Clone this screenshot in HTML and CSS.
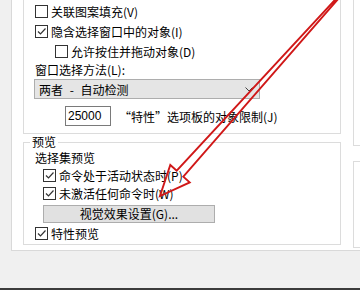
FILE: index.html
```html
<!DOCTYPE html>
<html lang="zh">
<head>
    <meta charset="UTF-8">
    <title>选项 - 选择集</title>
    <link rel="stylesheet" href="styles.css">
</head>
<body>
<div class="screen">
    <div class="tabpage">
        <div class="col-left">
            <div class="group group-top">
                <label class="check"><span class="box"></span>关联图案填充(V)</label>
                <label class="check"><span class="box"><svg viewBox="0 0 11 11"><path d="M2 5.5 L4.5 8 L9.5 2.5"/></svg></span>隐含选择窗口中的对象(I)</label>
                <label class="check sub"><span class="box"></span>允许按住并拖动对象(D)</label>
                <div class="field-label">窗口选择方法(L):</div>
                <div class="select">
                    <span class="select-text">两者 - 自动检测</span>
                    <svg class="chevron" viewBox="0 0 8 5"><path d="M0.5 0.5 L4 4 L7.5 0.5"/></svg>
                </div>
                <div class="limit-row">
                    <div class="num-input">25000</div>
                    <span class="limit-text">“特性”选项板的对象限制(J)</span>
                </div>
            </div>
            <div class="group group-preview">
                <div class="legend">预览</div>
                <div class="field-label sel-preview">选择集预览</div>
                <label class="check sub row18"><span class="box"><svg viewBox="0 0 11 11"><path d="M2 5.5 L4.5 8 L9.5 2.5"/></svg></span>命令处于活动状态时(P)</label>
                <label class="check sub row18"><span class="box"><svg viewBox="0 0 11 11"><path d="M2 5.5 L4.5 8 L9.5 2.5"/></svg></span>未激活任何命令时(W)</label>
                <div class="btn">视觉效果设置(G)...</div>
                <label class="check"><span class="box"><svg viewBox="0 0 11 11"><path d="M2 5.5 L4.5 8 L9.5 2.5"/></svg></span>特性预览</label>
            </div>
        </div>
        <div class="col-right">
            <div class="group-r first"></div>
            <div class="group-r second"></div>
        </div>
    </div>
    <div class="footer"></div>
    <div class="bottom-bar"></div>

    <!-- 红色箭头标注 -->
    <svg class="arrow" viewBox="0 0 360 290">
        <polygon points="341.6,-5 183.3,176.7 189.7,182.4 160,196 170.3,165 176.7,170.7 340.4,-6"/>
    </svg>
</div>
</body>
</html>
```

FILE: styles.css
```css
* {
    box-sizing: border-box;
}
html, body {
    margin: 0;
    height: 100%;
}
body {
    background: #f0f0f0;
    font-family: "Noto Sans CJK SC", "Noto Sans", sans-serif;
    font-size: 12px;
    color: #000;
    overflow: hidden;
}
.screen {
    position: relative;
    width: 360px;
    height: 290px;
    display: flex;
    flex-direction: column;
}
.tabpage {
    height: 251px;
    margin-left: 11px;
    padding-left: 11px;
    background: #fff;
    border-left: 1px solid #d9d9d9;
    border-bottom: 1px solid #d9d9d9;
    display: flex;
    gap: 12px;
}
.col-left {
    width: 318px;
    display: flex;
    flex-direction: column;
}
.col-right {
    flex: 1;
}
.group {
    border: 1px solid #dcdcdc;
}
.group-top {
    border-top: none;
    height: 134px;
    padding: 1px 0 0 11px;
}
.group-preview {
    position: relative;
    margin-top: 8px;
    height: 103px;
    padding: 6px 0 0 11px;
}
.legend {
    position: absolute;
    top: -9px;
    left: 6px;
    padding: 0 2px;
    line-height: 16px;
    background: #fff;
}
.check {
    display: flex;
    align-items: center;
    gap: 3px;
    height: 20px;
}
.check.sub {
    margin-left: 8px;
}
.check.row18 {
    height: 18px;
}
.group-top .check.sub {
    margin-left: 20px;
}
.box {
    width: 13px;
    height: 13px;
    border: 1px solid #333;
    background: #fff;
    flex: none;
}
.box svg {
    display: block;
    width: 11px;
    height: 11px;
    fill: none;
    stroke: #333;
    stroke-width: 1.2;
}
.field-label {
    height: 18px;
    line-height: 18px;
}
.sel-preview {
    height: 17px;
    line-height: 17px;
}
.select {
    display: flex;
    align-items: center;
    justify-content: space-between;
    width: 226px;
    height: 20px;
    margin-left: -1px;
    padding: 0 6px 0 4px;
    background: #e5e5e5;
    border: 1px solid #adadad;
}
.select-text {
    word-spacing: 4px;
}
.chevron {
    width: 8px;
    height: 5px;
    fill: none;
    stroke: #444;
    stroke-width: 1;
}
.limit-row {
    display: flex;
    align-items: center;
    gap: 8px;
    margin: 7px 0 0 30px;
}
.num-input {
    width: 46px;
    height: 20px;
    line-height: 18px;
    padding-left: 2px;
    border: 1px solid #7a7a7a;
    font-family: "Liberation Sans", Arial, sans-serif;
}
.btn {
    width: 172px;
    height: 18px;
    margin: 3px 0 0 8px;
    line-height: 16px;
    text-align: center;
    background: #e1e1e1;
    border: 1px solid #adadad;
}
.group-r {
    border: 1px solid #dcdcdc;
    border-right: none;
}
.group-r.first {
    border-top: none;
    height: 146px;
}
.group-r.second {
    margin-top: 15px;
    height: 87px;
}
.footer {
    flex: 1;
}
.bottom-bar {
    height: 2px;
    background: #3c3c3c;
}
.arrow {
    position: absolute;
    left: 0;
    top: 0;
    width: 360px;
    height: 290px;
    pointer-events: none;
}
.arrow polygon {
    fill: none;
    stroke: #d01818;
    stroke-width: 1.9;
}
```
